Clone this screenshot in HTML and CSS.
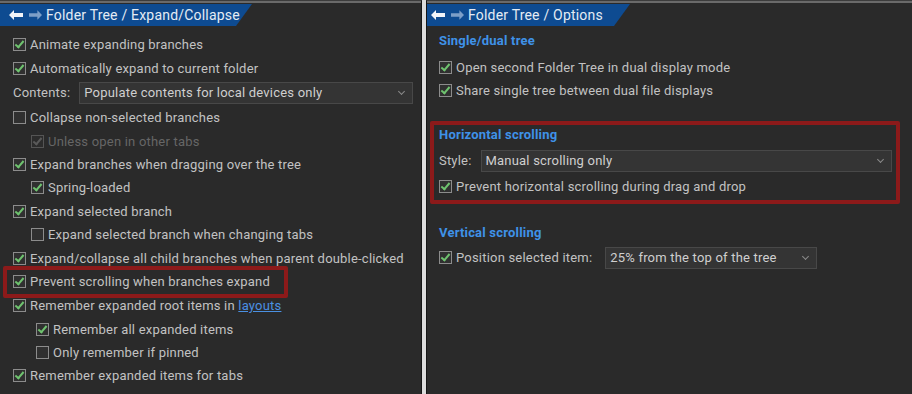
FILE: index.html
```html
<!DOCTYPE html>
<html lang="en">
<head>
    <meta charset="UTF-8">
    <title>Folder Tree Options</title>
    <link rel="stylesheet" href="styles.css">
</head>
<body>
    <div class="panel panel-left">
        <div class="header-bar">
            <div class="crumb">
                <svg class="arrow" width="14" height="10" viewBox="0 0 14 10"><path d="M0 5 L5 0 L5 3 L14 3 L14 7 L5 7 L5 10 Z" fill="#f2f4f8"/></svg>
                <svg class="arrow" width="13" height="10" viewBox="0 0 14 10"><path d="M14 5 L9 0 L9 3 L0 3 L0 7 L9 7 L9 10 Z" fill="#7d9fc8"/></svg>
                <span class="crumb-title">Folder Tree / Expand/Collapse</span>
            </div>
        </div>
        <div class="content">
            <div class="row"><span class="cb on"></span>Animate expanding branches</div>
            <div class="row"><span class="cb on"></span>Automatically expand to current folder</div>
            <div class="row row-select">
                <span class="field-label">Contents:</span>
                <div class="select select-wide">Populate contents for local devices only<span class="chev"></span></div>
            </div>
            <div class="row"><span class="cb"></span>Collapse non-selected branches</div>
            <div class="row indent disabled"><span class="cb on"></span>Unless open in other tabs</div>
            <div class="row"><span class="cb on"></span>Expand branches when dragging over the tree</div>
            <div class="row indent"><span class="cb on"></span>Spring-loaded</div>
            <div class="row"><span class="cb on"></span>Expand selected branch</div>
            <div class="row indent"><span class="cb"></span>Expand selected branch when changing tabs</div>
            <div class="row"><span class="cb on"></span>Expand/collapse all child branches when parent double-clicked</div>
            <div class="highlight highlight-left">
                <div class="row"><span class="cb on"></span>Prevent scrolling when branches expand</div>
            </div>
            <div class="row"><span class="cb on"></span>Remember expanded root items in&nbsp;<a class="link" href="#">layouts</a></div>
            <div class="row indent-2"><span class="cb on"></span>Remember all expanded items</div>
            <div class="row indent-2"><span class="cb"></span>Only remember if pinned</div>
            <div class="row"><span class="cb on"></span>Remember expanded items for tabs</div>
        </div>
    </div>

    <div class="panel panel-right">
        <div class="header-bar">
            <div class="crumb crumb-short">
                <svg class="arrow" width="14" height="10" viewBox="0 0 14 10"><path d="M0 5 L5 0 L5 3 L14 3 L14 7 L5 7 L5 10 Z" fill="#f2f4f8"/></svg>
                <svg class="arrow" width="13" height="10" viewBox="0 0 14 10"><path d="M14 5 L9 0 L9 3 L0 3 L0 7 L9 7 L9 10 Z" fill="#7d9fc8"/></svg>
                <span class="crumb-title">Folder Tree / Options</span>
            </div>
        </div>
        <div class="content content-right">
            <div class="section">
                <div class="heading">Single/dual tree</div>
                <div class="row"><span class="cb on"></span>Open second Folder Tree in dual display mode</div>
                <div class="row"><span class="cb on"></span>Share single tree between dual file displays</div>
            </div>
            <div class="highlight highlight-right">
                <div class="heading">Horizontal scrolling</div>
                <div class="row row-select">
                    <span class="field-label">Style:</span>
                    <div class="select select-fill">Manual scrolling only<span class="chev"></span></div>
                </div>
                <div class="row"><span class="cb on"></span>Prevent horizontal scrolling during drag and drop</div>
            </div>
            <div class="section section-last">
                <div class="heading">Vertical scrolling</div>
                <div class="row row-select">
                    <span class="cb on"></span><span class="field-label label-wide">Position selected item:</span>
                    <div class="select select-small">25% from the top of the tree<span class="chev"></span></div>
                </div>
            </div>
        </div>
    </div>
</body>
</html>
```

FILE: styles.css
```css
html, body {
    margin: 0;
    height: 100%;
}
body {
    display: flex;
    gap: 4px;
    background-color: #dcdcdc;
    font-family: Roboto, 'Liberation Sans', sans-serif;
    font-size: 13px;
    letter-spacing: 0.2px;
    color: #c2c2c2;
    overflow: hidden;
}
.panel {
    background-color: #2a2a2a;
    border-top: 1px solid #3c3c3c;
    box-shadow: inset 0 2px 0 #6a6a6a;
    box-sizing: border-box;
    height: 394px;
}
.panel-left {
    width: 422px;
    border-right: 1px solid #151515;
}
.panel-right {
    flex: 1;
    border-left: 1px solid #151515;
}
.header-bar {
    padding-top: 3px;
    height: 22px;
}
.crumb {
    display: flex;
    align-items: center;
    height: 22px;
    width: 252px;
    padding-left: 9px;
    box-sizing: border-box;
    background-color: #0e4b91;
    clip-path: polygon(0 0, 100% 0, calc(100% - 16px) 100%, 0 100%);
}
.crumb-short {
    width: 203px;
    padding-left: 4px;
}
.arrow {
    margin-right: 6px;
}
.crumb-title {
    color: #e4ebf4;
    font-size: 14px;
    margin-left: -2px;
}
.content {
    padding: 7px 0 0 13px;
}
.content-right {
    padding: 5px 14px 0 12px;
}
.row {
    display: flex;
    align-items: center;
    height: 23.45px;
    white-space: nowrap;
}
.row-select {
    height: 26px;
}
.indent {
    padding-left: 18px;
}
.indent-2 {
    padding-left: 23px;
}
.disabled {
    color: #666;
}
.cb {
    width: 11px;
    height: 11px;
    border: 1px solid #8c8c8c;
    background-color: #303030;
    margin-right: 4px;
    position: relative;
    flex: none;
}
.cb.on::after {
    content: "";
    position: absolute;
    left: 3px;
    top: 0px;
    width: 3px;
    height: 7px;
    border: solid #6fc36f;
    border-width: 0 2px 2px 0;
    transform: rotate(40deg);
}
.disabled .cb {
    border-color: #555;
    background-color: #2c2c2c;
}
.disabled .cb.on::after {
    border-color: #5a5a5a;
}
.field-label {
    margin-right: 9px;
}
.label-wide {
    margin-right: 13px;
}
.select {
    position: relative;
    height: 20px;
    line-height: 20px;
    background-color: #343434;
    border: 1px solid #484848;
    padding-left: 4px;
    color: #cfcfcf;
    box-sizing: content-box;
}
.select-wide {
    width: 328px;
}
.select-fill {
    flex: 1;
}
.select-small {
    width: 206px;
}
.chev {
    position: absolute;
    right: 8px;
    top: 6px;
    width: 4px;
    height: 4px;
    border: solid #8a8a8a;
    border-width: 0 1px 1px 0;
    transform: rotate(45deg);
}
.link {
    color: #4a90e2;
}
.highlight {
    border: 4px solid #8c1a1a;
    border-radius: 2px;
}
.highlight-left {
    margin: -4px 0 -4px -10px;
    padding: 0 0 0 6px;
    width: 271px;
    height: 24px;
    display: flex;
    align-items: center;
}
.highlight-right {
    margin: 19px -2px 0 -9px;
    padding: 0 4px 2px 5px;
}
.highlight-right .row-select {
    margin-top: 3px;
    margin-bottom: 2px;
}
.section-last {
    margin-top: 19px;
}
.heading {
    color: #3f92e8;
    font-weight: bold;
    height: 20px;
    line-height: 20px;
}
.section .heading {
    margin-bottom: 5px;
}
.section-last .heading {
    margin-bottom: 2px;
}
.content-right .row {
    height: 23px;
}
.content-right .row-select {
    height: 25px;
}
```
